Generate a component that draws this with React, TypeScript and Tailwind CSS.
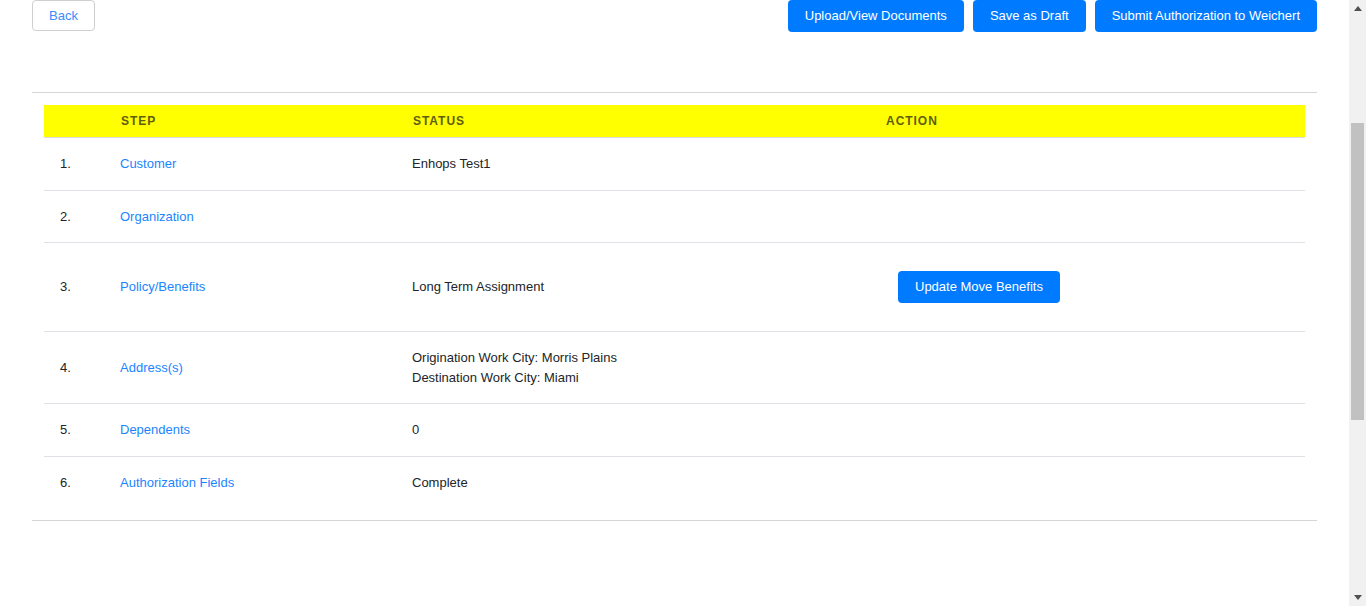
const rows = [
  { n: "1.", step: "Customer", status: ["Enhops Test1"] },
  { n: "2.", step: "Organization", status: [] as string[] },
  {
    n: "3.",
    step: "Policy/Benefits",
    status: ["Long Term Assignment"],
    action: "Update Move Benefits",
  },
  {
    n: "4.",
    step: "Address(s)",
    status: [
      "Origination Work City: Morris Plains",
      "Destination Work City: Miami",
    ],
  },
  { n: "5.", step: "Dependents", status: ["0"] },
  { n: "6.", step: "Authorization Fields", status: ["Complete"] },
];

const btn =
  "h-8 px-[17px] rounded-[4px] bg-[#007bff] text-white text-[13px] font-medium";

export default function App() {
  return (
    <div
      className="flex h-[606px] w-full overflow-hidden bg-white text-[13px] text-[#212529]"
      style={{ fontFamily: '"Liberation Sans", Arial, sans-serif' }}
    >
      <div className="flex-1 px-8">
        <div className="flex items-start justify-between">
          <button className="h-[31px] px-4 rounded-[4px] border border-[#cfcfcf] text-[#3d8bfd] text-[13px]">
            Back
          </button>
          <div className="flex gap-[9px]">
            <button className={btn}>Upload/View Documents</button>
            <button className={btn}>Save as Draft</button>
            <button className={btn}>Submit Authorization to Weichert</button>
          </div>
        </div>

        <div className="mt-[60px] border-y border-[#d6d6d6] px-3 pt-3 pb-3">
          <div className="flex h-[33px] items-center bg-[#ffff00] border-b border-[#dcdcdc] text-[12px] font-bold tracking-[0.08em] text-[#5e5e10]">
            <div className="w-[77px]" />
            <div className="w-[292px]">STEP</div>
            <div className="w-[473px]">STATUS</div>
            <div>ACTION</div>
          </div>
          {rows.map((r, i) => (
            <div
              key={r.n}
              className={
                "flex items-center py-4 leading-[19.5px] " +
                (i < rows.length - 1 ? "border-b border-[#dee2e6]" : "")
              }
            >
              <div className="w-[76px] pl-4">{r.n}</div>
              <div className="w-[292px] text-[#1a85ff]">{r.step}</div>
              <div className="w-[486px]">
                {r.status.map((s) => (
                  <div key={s}>{s}</div>
                ))}
                {r.status.length === 0 && <div>&nbsp;</div>}
              </div>
              {r.action && (
                <div className="py-3">
                  <button className={btn}>{r.action}</button>
                </div>
              )}
            </div>
          ))}
        </div>
      </div>

      <div className="flex w-[17px] flex-col items-center bg-[#f1f1f1]">
        <div className="flex h-[17px] items-center justify-center">
          <svg width="8" height="5" viewBox="0 0 8 5">
            <path d="M0 5 L4 0 L8 5 Z" fill="#505050" />
          </svg>
        </div>
        <div className="mt-[106px] h-[297px] w-[13px] bg-[#c1c1c1]" />
        <div className="flex-1" />
        <div className="flex h-[17px] items-center justify-center">
          <svg width="8" height="5" viewBox="0 0 8 5">
            <path d="M0 0 L8 0 L4 5 Z" fill="#505050" />
          </svg>
        </div>
      </div>
    </div>
  );
}
